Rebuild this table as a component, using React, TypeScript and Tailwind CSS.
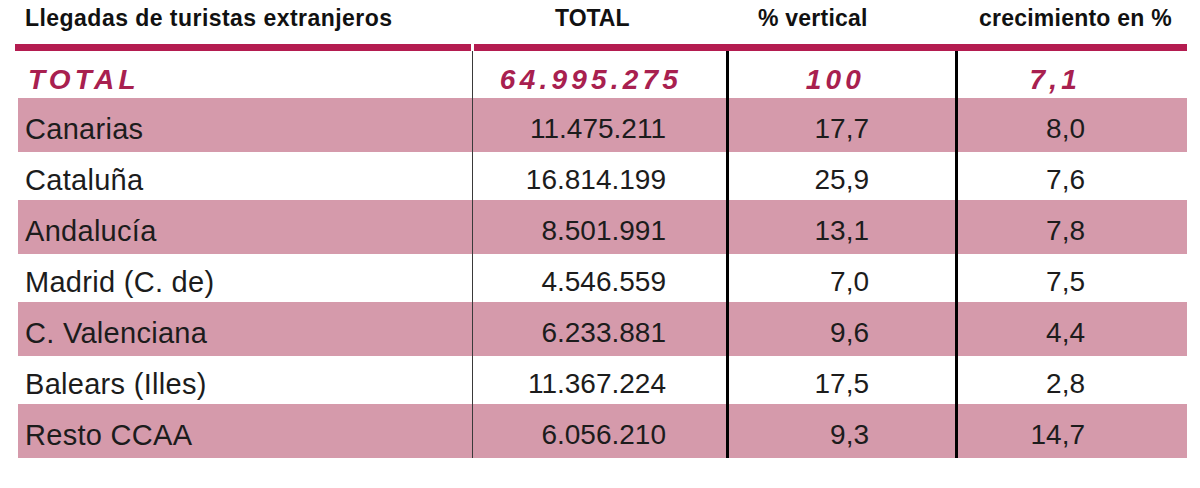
const rows = [
  { name: 'Canarias', total: '11.475.211', vertical: '17,7', growth: '8,0' },
  { name: 'Cataluña', total: '16.814.199', vertical: '25,9', growth: '7,6' },
  { name: 'Andalucía', total: '8.501.991', vertical: '13,1', growth: '7,8' },
  { name: 'Madrid (C. de)', total: '4.546.559', vertical: '7,0', growth: '7,5' },
  { name: 'C. Valenciana', total: '6.233.881', vertical: '9,6', growth: '4,4' },
  { name: 'Balears (Illes)', total: '11.367.224', vertical: '17,5', growth: '2,8' },
  { name: 'Resto CCAA', total: '6.056.210', vertical: '9,3', growth: '14,7' },
];

function App() {
  return (
    <div className="h-[488px] w-[1200px] bg-white font-['Liberation_Sans',Arial,sans-serif] text-[#1c1c1c]">
      {/* cabecera */}
      <div className="ml-[15px] grid h-[44px] grid-cols-[457px_254px_229px_232px] pt-[7px] text-[23px] font-bold leading-none text-[#111]">
        <div className="pl-[10px] tracking-[0.02em]">Llegadas de turistas extranjeros</div>
        <div className="pl-[83px]">TOTAL</div>
        <div className="pl-[32px] tracking-[0.01em]">% vertical</div>
        <div className="pl-[24px] tracking-[0.01em]">crecimiento en %</div>
      </div>
      <div className="ml-[15px] flex h-[7px] w-[1172px]">
        <div className="w-[456px] bg-[#b41c50]" />
        <div className="w-[3px]" />
        <div className="flex-1 bg-[#b41c50]" />
      </div>

      <div className="ml-[18px] w-[1169px] text-[28px] leading-none">
        {/* fila total */}
        <div className="grid h-[47px] grid-cols-[454px_254px_229px_232px] font-bold italic tracking-[0.15em] text-[#a8204f]">
          <div className="flex items-center pl-[10px] pt-[10px]">TOTAL</div>
          <div className="flex items-center justify-end border-l-[1.5px] border-[#3a3a3a] pr-[44px] pt-[10px]">
            64.995.275
          </div>
          <div className="flex items-center justify-end border-l-[3px] border-black pr-[90px] pt-[10px]">100</div>
          <div className="flex items-center justify-end border-l-[3px] border-black pr-[106px] pt-[10px]">7,1</div>
        </div>

        {rows.map((row, i) => (
          <div
            key={row.name}
            className={
              i % 2 === 0
                ? 'grid h-[54px] grid-cols-[454px_254px_229px_232px] bg-[#d59aab]'
                : 'grid h-[48px] grid-cols-[454px_254px_229px_232px] bg-white'
            }
          >
            <div className="flex items-center pl-[7px] pt-[8px] text-[29px] tracking-[0.01em]">{row.name}</div>
            <div className="flex items-center justify-end border-l-[1.5px] border-[#3a3a3a] pr-[60px] pt-[8px]">
              {row.total}
            </div>
            <div className="flex items-center justify-end border-l-[3px] border-black pr-[86px] pt-[8px]">
              {row.vertical}
            </div>
            <div className="flex items-center justify-end border-l-[3px] border-black pr-[102px] pt-[8px]">
              {row.growth}
            </div>
          </div>
        ))}
      </div>
    </div>
  );
}

export default App;
